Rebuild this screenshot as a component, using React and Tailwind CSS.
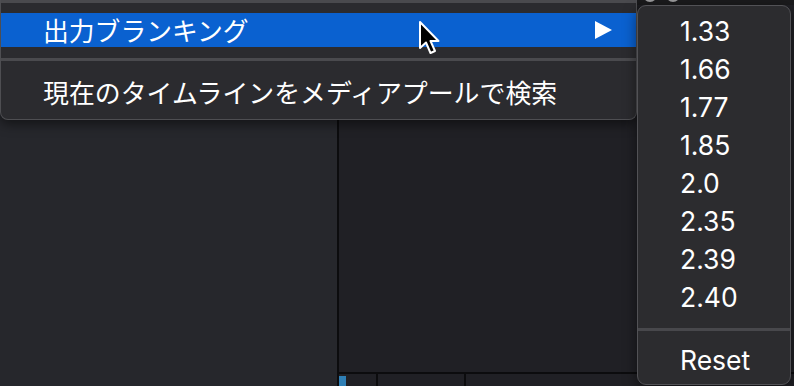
import { useState } from 'react'

const ratios = ['1.33', '1.66', '1.77', '1.85', '2.0', '2.35', '2.39', '2.40']

const jp = { fontFamily: '"Noto Sans CJK JP", "Noto Sans", sans-serif' }
const latin = { fontFamily: 'Inter, "Noto Sans", sans-serif' }

function Cursor() {
  return (
    <svg
      className="absolute left-[418px] top-[20px]"
      width="26"
      height="36"
      viewBox="0 0 26 36"
    >
      <path
        d="M2 2 L2 28 L8 22.5 L12.5 33 L17 31 L12.5 21 L20.5 21 Z"
        fill="#000"
        stroke="#fff"
        strokeWidth="2"
        strokeLinejoin="round"
      />
    </svg>
  )
}

function MainMenu() {
  return (
    <div
      className="absolute left-0 top-0 flex h-[120px] w-[637px] flex-col rounded-b-[8px] border border-t-0 border-[#4e4e52] bg-[#2b2b2f] text-white shadow-[0_4px_12px_rgba(0,0,0,0.5)]"
      style={jp}
    >
      <div className="h-[3px] bg-[#4a4a4e]" />
      <div className="relative mt-[10px] flex h-[37px] items-center bg-[#0a61d0] pl-[42px] pr-[24px]">
        <span className="text-[25.8px] leading-none">出力ブランキング</span>
        <svg className="ml-auto" width="17" height="18" viewBox="0 0 17 18">
          <path d="M0 0 L17 9 L0 18 Z" fill="#fff" />
        </svg>
      </div>
      <div className="mt-[11px] h-[3px] bg-[#4a4a4e]" />
      <div className="flex h-[62px] items-center pl-[42px] pt-[4px]">
        <span className="text-[25.9px] leading-none">
          現在のタイムラインをメディアプールで検索
        </span>
      </div>
    </div>
  )
}

function SubMenu() {
  const [active] = useState(null)
  return (
    <div
      className="absolute left-[637px] top-[5px] flex h-[380px] w-[154px] flex-col rounded-[9px] border border-[#525256] bg-[#2c2c2f] pt-[6px] text-white shadow-[0_4px_14px_rgba(0,0,0,0.5)]"
      style={latin}
    >
      {ratios.map((r) => (
        <div
          key={r}
          className={`flex h-[38px] items-center pl-[42px] text-[26.5px] leading-none ${active === r ? 'bg-[#0a61d0]' : ''}`}
        >
          {r}
        </div>
      ))}
      <div className="mt-[12px] h-[3px] bg-[#48484c]" />
      <div className="mt-[10px] flex h-[38px] items-center pl-[42px] text-[26.5px] leading-none">
        Reset
      </div>
    </div>
  )
}

export default function App() {
  return (
    <div className="relative h-[386px] w-[794px] overflow-hidden bg-[#1c1c1f]">
      <div className="flex h-full pt-[5px]">
        <div className="w-[337px] bg-[#26272c]" />
        <div className="w-[2px] bg-[#0c0c0e]" />
        <div className="flex flex-1 flex-col bg-[#202025]">
          <div className="flex-1" />
          <div className="flex h-[14px] border-t-2 border-[#0c0c0e]">
            <div className="mt-[2px] w-[7px] bg-[#2f7fb5]" />
            <div className="w-[32px] border-r-2 border-[#0c0c0e]" />
            <div className="w-[88px] border-r-2 border-[#0c0c0e]" />
          </div>
        </div>
      </div>

      <div className="absolute left-[637px] top-0 h-[5px] w-[157px] bg-[#1b1b1d]">
        <div className="absolute left-[6px] top-[-12px] h-[14px] w-[14px] rounded-full bg-[#9c9c9e]" />
        <div className="absolute left-[29px] top-[-12px] h-[14px] w-[14px] rounded-full bg-[#9c9c9e]" />
      </div>

      <MainMenu />
      <SubMenu />
      <Cursor />
    </div>
  )
}
